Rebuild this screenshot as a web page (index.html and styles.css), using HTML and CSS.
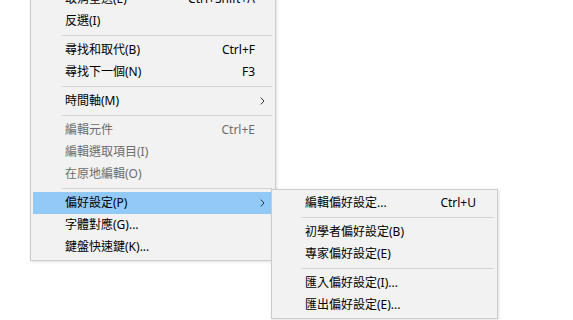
FILE: index.html
```html
<!DOCTYPE html>
<html lang="zh-Hant">
<head>
<meta charset="utf-8">
<link rel="stylesheet" href="styles.css">
</head>
<body>
<div class="stage">
  <div class="menu main">
    <div class="item"><span class="label">取消全選(E)</span><span class="key">Ctrl+Shift+A</span><span class="tail"></span></div>
    <div class="item"><span class="label">反選(I)</span><span class="tail"></span></div>
    <div class="sep"></div>
    <div class="item"><span class="label">尋找和取代(B)</span><span class="key">Ctrl+F</span><span class="tail"></span></div>
    <div class="item"><span class="label">尋找下一個(N)</span><span class="key">F3</span><span class="tail"></span></div>
    <div class="sep"></div>
    <div class="item"><span class="label">時間軸(M)</span><span class="tail"><svg class="chev" width="5" height="8" viewBox="0 0 5 8"><path d="M0.8 0.6 L4 4 L0.8 7.4" fill="none" stroke="#333" stroke-width="1"/></svg></span></div>
    <div class="sep"></div>
    <div class="item disabled"><span class="label">編輯元件</span><span class="key">Ctrl+E</span><span class="tail"></span></div>
    <div class="item disabled"><span class="label">編輯選取項目(I)</span><span class="tail"></span></div>
    <div class="item disabled"><span class="label">在原地編輯(O)</span><span class="tail"></span></div>
    <div class="sep"></div>
    <div class="item active"><span class="label">偏好設定(P)</span><span class="tail"><svg class="chev" width="5" height="8" viewBox="0 0 5 8"><path d="M0.8 0.6 L4 4 L0.8 7.4" fill="none" stroke="#333" stroke-width="1"/></svg></span></div>
    <div class="item"><span class="label">字體對應(G)...</span><span class="tail"></span></div>
    <div class="item"><span class="label">鍵盤快速鍵(K)...</span><span class="tail"></span></div>
  </div>

  <div class="menu sub">
    <div class="item"><span class="label">編輯偏好設定...</span><span class="key">Ctrl+U</span><span class="tail"></span></div>
    <div class="sep"></div>
    <div class="item"><span class="label">初學者偏好設定(B)</span><span class="tail"></span></div>
    <div class="item"><span class="label">專家偏好設定(E)</span><span class="tail"></span></div>
    <div class="sep"></div>
    <div class="item"><span class="label">匯入偏好設定(I)...</span><span class="tail"></span></div>
    <div class="item"><span class="label">匯出偏好設定(E)...</span><span class="tail"></span></div>
  </div>
</div>
</body>
</html>
```
FILE: styles.css
```css
html, body {
  margin: 0;
  padding: 0;
  background: #ffffff;
}

body {
  font-family: "Noto Sans", "Noto Sans CJK TC", sans-serif;
  font-size: 12px;
  color: #000000;
  overflow: hidden;
}

.stage {
  position: relative;
  width: 573px;
  height: 320px;
  overflow: hidden;
}

.menu {
  box-sizing: border-box;
  background: #f2f2f2;
  border: 1px solid #cccccc;
  padding: 2px;
  box-shadow: 1px 1px 3px rgba(0, 0, 0, 0.12);
}

.main {
  width: 246px;
  margin-left: 30px;
  margin-top: -15px;
}

.sub {
  position: absolute;
  left: 271px;
  top: 189px;
  width: 227px;
}

.item {
  display: flex;
  align-items: center;
  height: 22px;
  line-height: 22px;
  padding-left: 32px;
  white-space: nowrap;
}

.sub .item {
  padding-left: 31px;
}

.item .label {
  flex: 1;
}

.item .key {
  text-align: right;
}

.item .tail {
  width: 18px;
  display: flex;
  align-items: center;
}

.sub .item .tail {
  width: 19px;
}

.chev {
  display: block;
  margin-left: 5px;
}

.item.disabled {
  color: #6d6d6d;
}

.item.active {
  background: #91c9f7;
}

.sep {
  height: 1px;
  background: #d4d4d4;
  margin: 3px 1px 3px 29px;
}

.sub .sep {
  margin-left: 27px;
}
```
